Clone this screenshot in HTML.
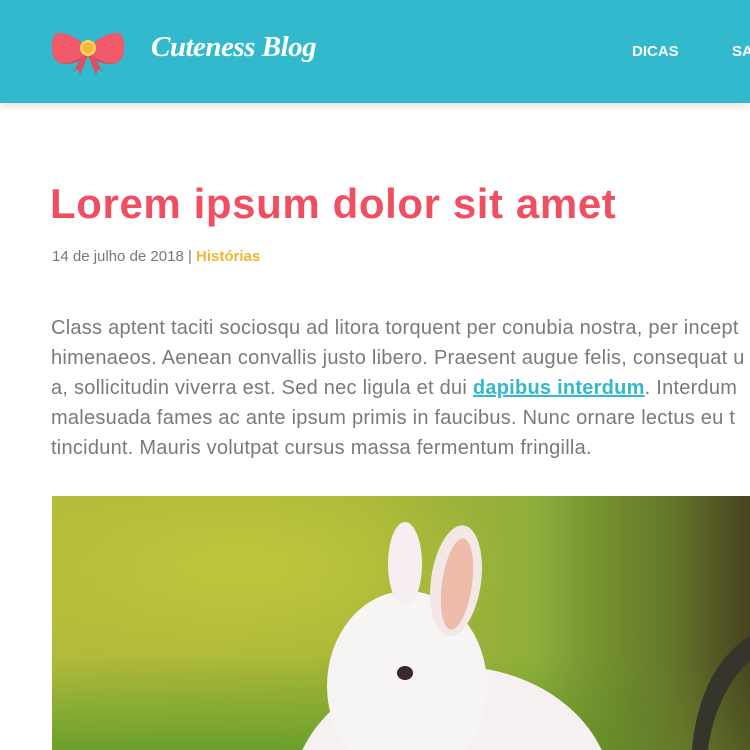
<!DOCTYPE html>
<html><head><meta charset="utf-8"><style>
*{margin:0;padding:0;box-sizing:border-box}
body{width:750px;height:750px;overflow:hidden;background:#fff;font-family:"Liberation Sans",sans-serif;position:relative}
.hdr{position:absolute;left:0;top:0;width:750px;height:103px;background:#32b9cd;box-shadow:0 3px 8px rgba(0,0,0,.12)}
.brand{position:absolute;left:151px;top:31px;color:#fff;font-family:"Liberation Serif",serif;font-style:italic;font-weight:bold;font-size:29px;letter-spacing:-.5px}
.nav{position:absolute;top:43px;color:#fff;font-weight:bold;font-size:15px}
h1{position:absolute;left:50px;top:180px;color:#ef4f61;font-size:42px;font-weight:bold;white-space:nowrap;letter-spacing:.6px}
.meta{position:absolute;left:52px;top:248px;font-size:15px;color:#777;white-space:nowrap}
.meta b{color:#f5b52e}
.txt{position:absolute;left:51px;top:313px;width:760px;font-size:20px;line-height:30px;color:#7a7a7a;white-space:nowrap;letter-spacing:.25px}
.txt a{color:#32b9cd;font-weight:bold;text-decoration:underline}
.img{position:absolute;left:52px;top:496px;width:698px;height:254px;overflow:hidden;background:linear-gradient(90deg,#b3bb3a 0%,#a9b63a 45%,#8fae3a 70%,#6a9a2a 88%,#4a5a22 100%)}
</style></head><body>
<div class="hdr">
<svg style="position:absolute;left:51px;top:28px" width="74" height="48" viewBox="0 0 74 48">
<path d="M37 20 C28 10 12 2 4 6 C-1 14 0 28 6 34 C16 38 28 32 37 24Z" fill="#ef5a6a"/>
<path d="M37 20 C46 10 62 2 70 6 C75 14 74 28 68 34 C58 38 46 32 37 24Z" fill="#ef5a6a"/>
<path d="M6 34 C16 38 28 32 37 24 L35 29 C26 36 14 38 6 34Z" fill="#d9485a"/>
<path d="M68 34 C58 38 46 32 37 24 L39 29 C48 36 60 38 68 34Z" fill="#d9485a"/>
<path d="M34 24 L22 44 L27 41 L29 47 L37 27Z" fill="#e04d5e"/>
<path d="M40 24 L52 44 L47 41 L45 47 L37 27Z" fill="#e04d5e"/>
<circle cx="37" cy="20" r="8" fill="#fcd35a"/><circle cx="37" cy="20" r="5.5" fill="#f5b83f"/>
</svg>
<div class="brand">Cuteness Blog</div>
<div class="nav" style="left:632px">DICAS</div>
<div class="nav" style="left:732px">SA</div>
</div>
<h1>Lorem ipsum dolor sit amet</h1>
<div class="meta">14 de julho de 2018 | <b>Histórias</b></div>
<div class="txt">Class aptent taciti sociosqu ad litora torquent per conubia nostra, per incept<br>himenaeos. Aenean convallis justo libero. Praesent augue felis, consequat u<br>a, sollicitudin viverra est. Sed nec ligula et dui <a>dapibus interdum</a>. Interdum<br>malesuada fames ac ante ipsum primis in faucibus. Nunc ornare lectus eu t<br>tincidunt. Mauris volutpat cursus massa fermentum fringilla.</div>
<div class="img">
<div style="position:absolute;left:0;top:0;width:698px;height:254px;background:radial-gradient(ellipse 260px 110px at 200px 70px,rgba(205,212,60,.55),transparent)"></div>
<div style="position:absolute;left:0;top:160px;width:698px;height:94px;background:linear-gradient(180deg,transparent,#6aa02c)"></div>
<div style="position:absolute;left:480px;top:0;width:218px;height:254px;background:linear-gradient(90deg,transparent,rgba(95,80,40,.5) 70%,rgba(70,60,30,.7))"></div>
<svg style="position:absolute;left:0;top:0" width="698" height="254">
<path d="M640 254 C645 200 665 160 698 140 L698 165 C675 185 660 220 656 254Z" fill="#35352c"/>
<ellipse cx="400" cy="300" rx="160" ry="130" fill="#f4f1f0"/>
<ellipse cx="355" cy="190" rx="80" ry="95" fill="#f7f5f4"/>
<ellipse cx="353" cy="68" rx="17" ry="42" fill="#f6eef0"/>
<ellipse cx="404" cy="85" rx="25" ry="56" transform="rotate(8 404 85)" fill="#f4e8e6"/>
<ellipse cx="405" cy="88" rx="15" ry="46" transform="rotate(8 405 88)" fill="#eebcaa"/>
<ellipse cx="353" cy="177" rx="8" ry="7" fill="#3c2630"/>
</svg>
</div>
</body></html>
